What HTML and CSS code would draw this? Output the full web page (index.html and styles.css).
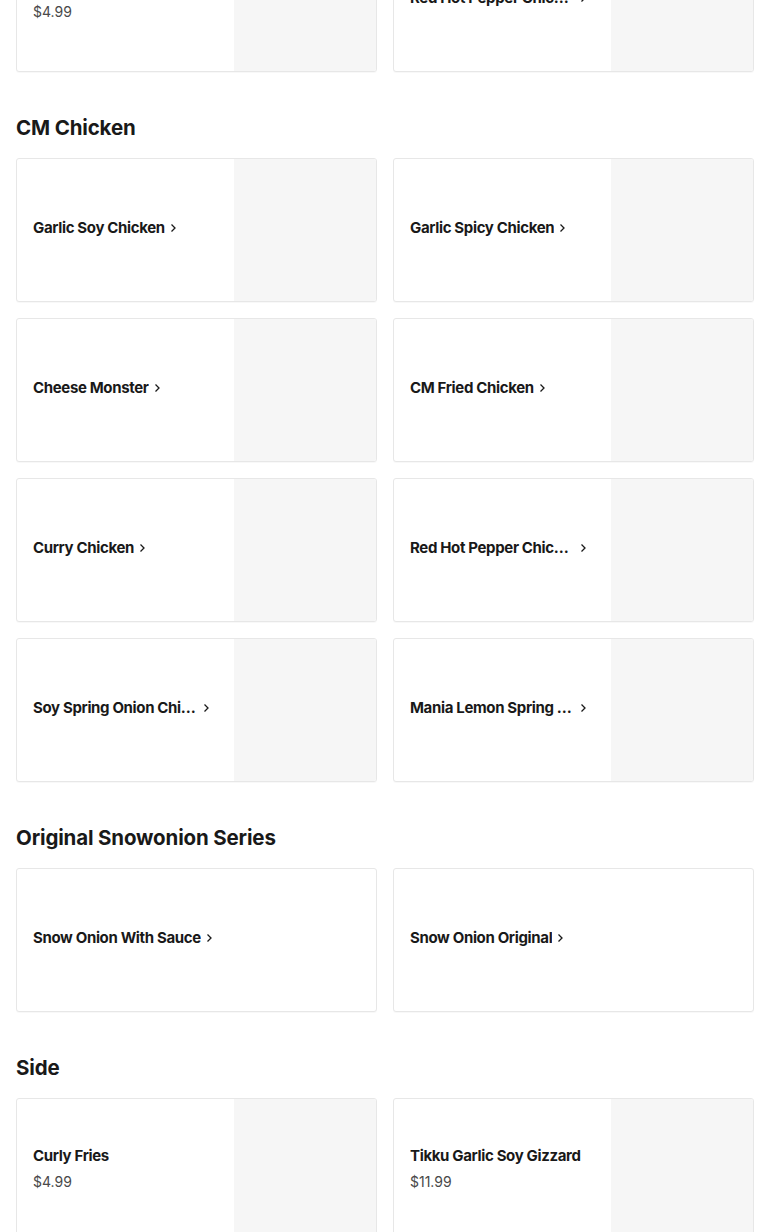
FILE: index.html
```html
<!DOCTYPE html>
<html lang="en">
<head>
<meta charset="utf-8">
<title>Menu</title>
<link rel="stylesheet" href="styles.css">
</head>
<body>
<main class="menu">
  <section class="section section--scrolled">
    <div class="grid">
      <a class="card">
        <div class="card-body card-body--priced">
          <div class="card-title"><span class="name">Curly Fries</span></div>
          <div class="price">$4.99</div>
        </div>
        <div class="thumb"></div>
      </a>
      <a class="card">
        <div class="card-body">
          <div class="card-title"><span class="name name--link">Red Hot Pepper Chicken Wings</span><svg class="chev" viewBox="0 0 8 10"><path d="M2.5 1.5 6 5 2.5 8.5"/></svg></div>
        </div>
        <div class="thumb"></div>
      </a>
    </div>
  </section>

  <section class="section">
    <h2 class="section-title">CM Chicken</h2>
    <div class="grid">
      <a class="card">
        <div class="card-body"><div class="card-title"><span class="name name--link">Garlic Soy Chicken</span><svg class="chev" viewBox="0 0 8 10"><path d="M2.5 1.5 6 5 2.5 8.5"/></svg></div></div>
        <div class="thumb"></div>
      </a>
      <a class="card">
        <div class="card-body"><div class="card-title"><span class="name name--link">Garlic Spicy Chicken</span><svg class="chev" viewBox="0 0 8 10"><path d="M2.5 1.5 6 5 2.5 8.5"/></svg></div></div>
        <div class="thumb"></div>
      </a>
      <a class="card">
        <div class="card-body"><div class="card-title"><span class="name name--link">Cheese Monster</span><svg class="chev" viewBox="0 0 8 10"><path d="M2.5 1.5 6 5 2.5 8.5"/></svg></div></div>
        <div class="thumb"></div>
      </a>
      <a class="card">
        <div class="card-body"><div class="card-title"><span class="name name--link">CM Fried Chicken</span><svg class="chev" viewBox="0 0 8 10"><path d="M2.5 1.5 6 5 2.5 8.5"/></svg></div></div>
        <div class="thumb"></div>
      </a>
      <a class="card">
        <div class="card-body"><div class="card-title"><span class="name name--link">Curry Chicken</span><svg class="chev" viewBox="0 0 8 10"><path d="M2.5 1.5 6 5 2.5 8.5"/></svg></div></div>
        <div class="thumb"></div>
      </a>
      <a class="card">
        <div class="card-body"><div class="card-title"><span class="name name--link">Red Hot Pepper Chicken</span><svg class="chev" viewBox="0 0 8 10"><path d="M2.5 1.5 6 5 2.5 8.5"/></svg></div></div>
        <div class="thumb"></div>
      </a>
      <a class="card">
        <div class="card-body"><div class="card-title"><span class="name name--link">Soy Spring Onion Chicken</span><svg class="chev" viewBox="0 0 8 10"><path d="M2.5 1.5 6 5 2.5 8.5"/></svg></div></div>
        <div class="thumb"></div>
      </a>
      <a class="card">
        <div class="card-body"><div class="card-title"><span class="name name--link">Mania Lemon Spring Onion Chicken</span><svg class="chev" viewBox="0 0 8 10"><path d="M2.5 1.5 6 5 2.5 8.5"/></svg></div></div>
        <div class="thumb"></div>
      </a>
    </div>
  </section>

  <section class="section">
    <h2 class="section-title">Original Snowonion Series</h2>
    <div class="grid">
      <a class="card">
        <div class="card-body"><div class="card-title"><span class="name name--link">Snow Onion With Sauce</span><svg class="chev" viewBox="0 0 8 10"><path d="M2.5 1.5 6 5 2.5 8.5"/></svg></div></div>
      </a>
      <a class="card">
        <div class="card-body"><div class="card-title"><span class="name name--link">Snow Onion Original</span><svg class="chev" viewBox="0 0 8 10"><path d="M2.5 1.5 6 5 2.5 8.5"/></svg></div></div>
      </a>
    </div>
  </section>

  <section class="section">
    <h2 class="section-title">Side</h2>
    <div class="grid">
      <a class="card">
        <div class="card-body card-body--priced">
          <div class="card-title"><span class="name">Curly Fries</span></div>
          <div class="price">$4.99</div>
        </div>
        <div class="thumb"></div>
      </a>
      <a class="card">
        <div class="card-body card-body--priced">
          <div class="card-title"><span class="name">Tikku Garlic Soy Gizzard</span></div>
          <div class="price">$11.99</div>
        </div>
        <div class="thumb"></div>
      </a>
    </div>
  </section>
</main>
</body>
</html>
```

FILE: styles.css
```css
* { box-sizing: border-box; }

html, body {
  margin: 0;
  padding: 0;
  background: #ffffff;
}

body {
  font-family: "Inter", "Liberation Sans", sans-serif;
  color: #191919;
  overflow: hidden;
}

.menu {
  padding: 0 16px;
}

.section {
  padding-top: 42px;
}

.section--scrolled {
  padding-top: 0;
  margin-top: -72px;
}

.section-title {
  margin: 0 0 16px;
  font-size: 20.5px;
  line-height: 28px;
  font-weight: 700;
  letter-spacing: -0.15px;
  color: #191919;
}

.grid {
  display: grid;
  grid-template-columns: 1fr 1fr;
  gap: 16px;
}

.card {
  display: flex;
  height: 144px;
  border: 1px solid #e7e7e7;
  border-radius: 3px;
  background: #fff;
  overflow: hidden;
  box-shadow: 0 1px 1px rgba(0,0,0,0.03);
}

.card-body {
  flex: 1;
  min-width: 0;
  display: flex;
  flex-direction: column;
  justify-content: center;
  padding: 0 16px 4px;
}

.card-body--priced {
  padding-bottom: 2px;
}

.card-title {
  display: flex;
  align-items: center;
  font-size: 15px;
  line-height: 20px;
  font-weight: 700;
  letter-spacing: -0.35px;
  color: #191919;
}

.name {
  white-space: nowrap;
  overflow: hidden;
  text-overflow: ellipsis;
}

.name--link {
  max-width: calc(100% - 20px);
}

.chev {
  width: 8px;
  height: 10px;
  margin-left: 4px;
  flex: none;
  fill: none;
  stroke: #191919;
  stroke-width: 1.3;
}

.price {
  margin-top: 6px;
  font-size: 14px;
  line-height: 20px;
  font-weight: 400;
  color: #494949;
}

.thumb {
  width: 142px;
  height: 142px;
  flex: none;
  background: #f6f6f6;
}
```
